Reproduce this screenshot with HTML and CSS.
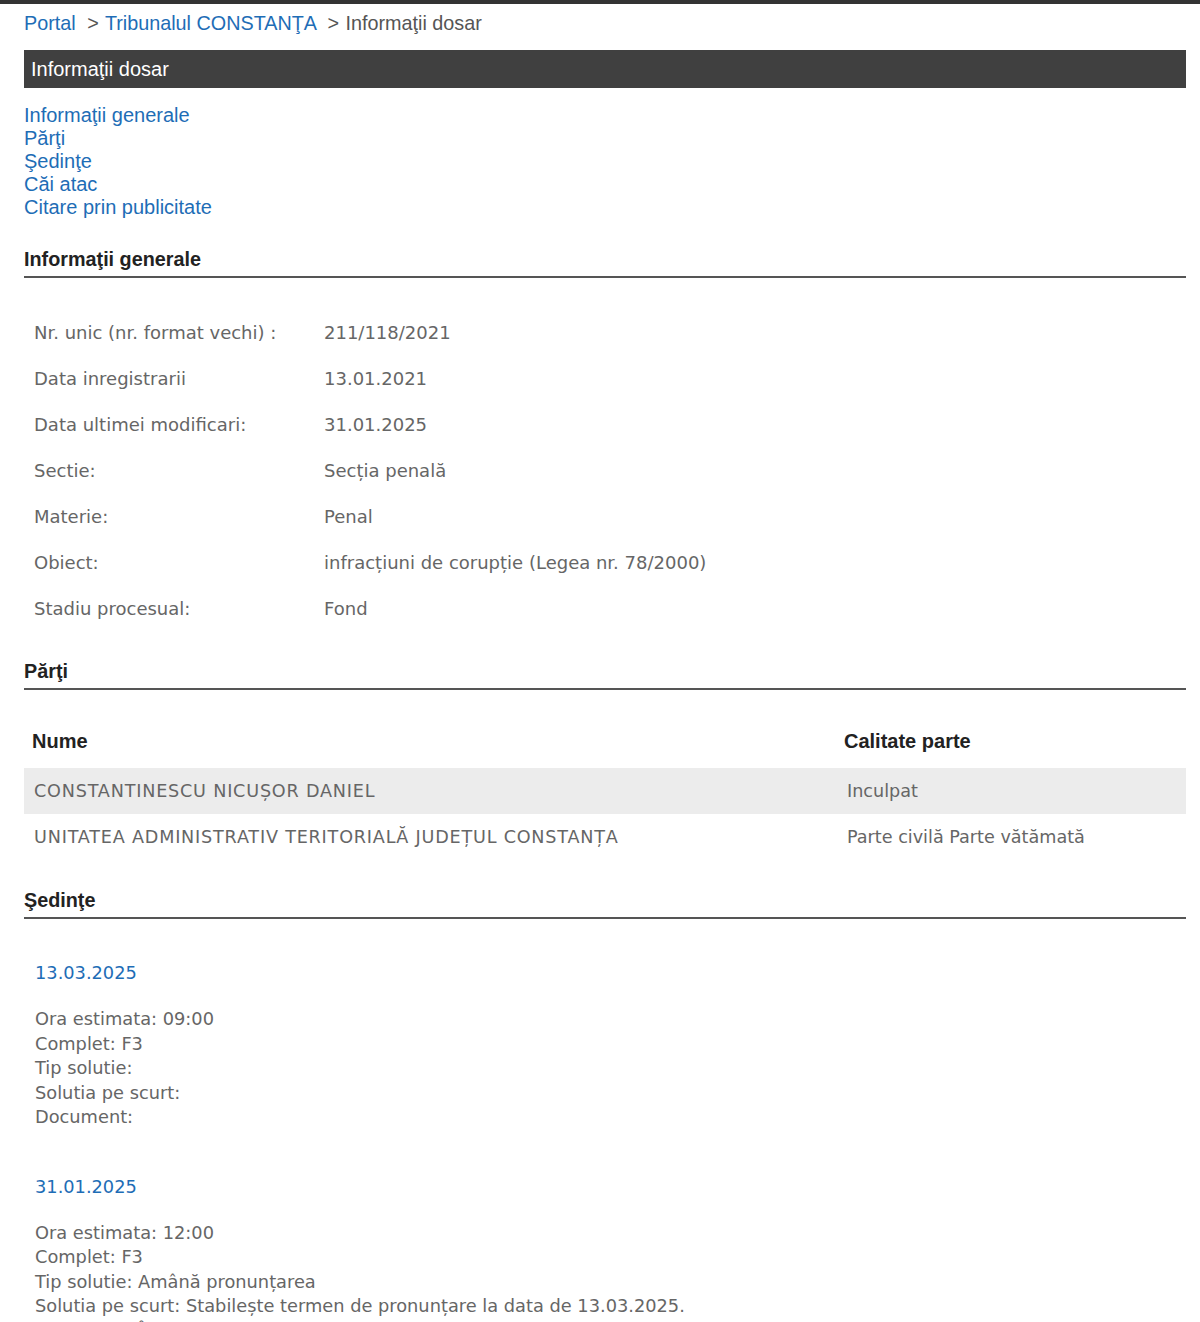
FILE: index.html
```html
<!DOCTYPE html>
<html>
<head>
    <meta charset="utf-8">
    <title>Informaţii dosar</title>
    <link rel="stylesheet" href="styles.css">
</head>
<body>
    <div class="page">
        <div class="breadcrumb">
            <a href="#">Portal</a>
            <span class="sep">&gt;</span>
            <a href="#">Tribunalul CONSTANŢA</a>
            <span class="sep">&gt;</span>
            <span class="current">Informaţii dosar</span>
        </div>

        <div class="title-bar">Informaţii dosar</div>

        <ul class="toc">
            <li><a href="#generale">Informaţii generale</a></li>
            <li><a href="#parti">Părţi</a></li>
            <li><a href="#sedinte">Şedinţe</a></li>
            <li><a href="#cai">Căi atac</a></li>
            <li><a href="#citare">Citare prin publicitate</a></li>
        </ul>

        <!-- general info -->
        <h2 id="generale" class="section-title">Informaţii generale</h2>
        <table class="info-table">
            <tr><td class="label">Nr. unic (nr. format vechi) :</td><td>211/118/2021</td></tr>
            <tr><td class="label">Data inregistrarii</td><td>13.01.2021</td></tr>
            <tr><td class="label">Data ultimei modificari:</td><td>31.01.2025</td></tr>
            <tr><td class="label">Sectie:</td><td>Secția penală</td></tr>
            <tr><td class="label">Materie:</td><td>Penal</td></tr>
            <tr><td class="label">Obiect:</td><td>infracțiuni de corupție (Legea nr. 78/2000)</td></tr>
            <tr><td class="label">Stadiu procesual:</td><td>Fond</td></tr>
        </table>

        <!-- parties -->
        <h2 id="parti" class="section-title">Părţi</h2>
        <table class="parties-table">
            <thead>
                <tr><th class="col-name">Nume</th><th class="col-role">Calitate parte</th></tr>
            </thead>
            <tbody>
                <tr class="odd"><td class="name">CONSTANTINESCU NICUȘOR DANIEL</td><td class="role">Inculpat</td></tr>
                <tr><td class="name">UNITATEA ADMINISTRATIV TERITORIALĂ JUDEȚUL CONSTANȚA</td><td class="role">Parte civilă Parte vătămată</td></tr>
            </tbody>
        </table>

        <!-- hearings -->
        <h2 id="sedinte" class="section-title">Şedinţe</h2>
        <div class="hearings">
            <div class="hearing">
                <div class="hearing-date">13.03.2025</div>
                <div class="hearing-details">
                    Ora estimata: 09:00<br>
                    Complet: F3<br>
                    Tip solutie: <br>
                    Solutia pe scurt: <br>
                    Document:
                </div>
            </div>
            <div class="hearing">
                <div class="hearing-date">31.01.2025</div>
                <div class="hearing-details">
                    Ora estimata: 12:00<br>
                    Complet: F3<br>
                    Tip solutie: Amână pronunțarea<br>
                    Solutia pe scurt: Stabilește termen de pronunțare la data de 13.03.2025.<br>
                    Document: Încheiere - amânarea pronunţării 31.01.2025
                </div>
            </div>
        </div>
    </div>
</body>
</html>
```

FILE: styles.css
```css
body {
    margin: 0;
    border-top: 4px solid #333;
    font-family: 'Liberation Sans', Arial, sans-serif;
    background: #fff;
}

a {
    color: #1e6db6;
    text-decoration: none;
}

.page {
    margin-left: 24px;
    width: 1162px;
}

.breadcrumb {
    margin-top: 7px;
    font-size: 19.8px;
    line-height: 24px;
    color: #555;
}

.breadcrumb .sep {
    margin: 0 1px 0 6px;
}

.title-bar {
    margin-top: 15px;
    height: 38px;
    line-height: 38px;
    padding-left: 7px;
    background: #404040;
    color: #fff;
    font-size: 20px;
}

.toc {
    list-style: none;
    margin: 16px 0 0;
    padding: 0;
    font-size: 20px;
    line-height: 23px;
}

.section-title {
    margin: 28px 0 0;
    padding-bottom: 5px;
    font-size: 19.8px;
    line-height: 24px;
    color: #222;
    border-bottom: 2px solid #555;
}

.info-table,
.parties-table {
    width: 100%;
    border-collapse: collapse;
    margin-top: 31px;
    font-family: 'DejaVu Sans', Verdana, sans-serif;
    font-size: 18px;
    color: #666;
}

.info-table td {
    height: 46px;
    padding: 0 10px;
    vertical-align: middle;
}

.info-table td.label {
    width: 270px;
}

.parties-table {
    margin-top: 29px;
    font-size: 17.6px;
}

.parties-table th {
    height: 45px;
    padding: 0 8px 4px;
    text-align: left;
    font-family: 'Liberation Sans', Arial, sans-serif;
    font-size: 20px;
    color: #222;
}

.parties-table th.col-name {
    width: 794px;
}

.parties-table th.col-role {
    padding-left: 10px;
}

.parties-table td {
    height: 46px;
    padding: 0 10px;
}

.parties-table td.name {
    letter-spacing: 0.8px;
}

.parties-table td.role {
    padding-left: 13px;
}

.parties-table tr.odd td {
    background: #ececec;
}

.hearings {
    padding: 42px 0 0 11px;
    font-family: 'DejaVu Sans', Verdana, sans-serif;
    font-size: 17.8px;
    line-height: 24.5px;
    color: #666;
}

.hearing + .hearing {
    margin-top: 45px;
}

.hearing-date {
    color: #1e6db6;
}

.hearing-details {
    margin-top: 21.5px;
}
```
